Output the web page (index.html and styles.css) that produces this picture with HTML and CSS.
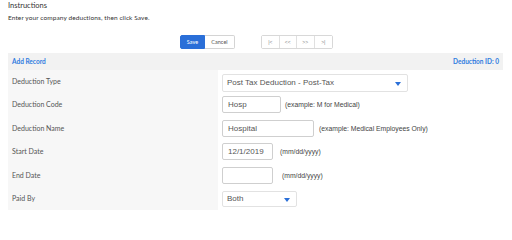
FILE: index.html
```html
<!DOCTYPE html>
<html>
<head>
<meta charset="utf-8">
<link rel="stylesheet" href="styles.css">
</head>
<body>
<div class="intro">
  <div class="intro-title">Instructions</div>
  <div class="intro-text">Enter your company deductions, then click Save.</div>
</div>
<div class="toolbar">
  <div class="btn-group">
    <button class="btn btn-primary">Save</button>
    <button class="btn btn-default">Cancel</button>
  </div>
  <div class="pager">
    <button class="pg">|&lt;</button>
    <button class="pg">&lt;&lt;</button>
    <button class="pg">&gt;&gt;</button>
    <button class="pg">&gt;|</button>
  </div>
</div>
<div class="bar">
  <span class="link">Add Record</span>
  <span class="link">Deduction ID: 0</span>
</div>
<div class="form">
  <div class="label">Deduction Type</div>
  <div class="field r4">
    <div class="select w-type">Post Tax Deduction - Post-Tax<span class="caret"></span></div>
  </div>
  <div class="label">Deduction Code</div>
  <div class="field">
    <div class="input w-code">Hosp</div><span class="hint">(example: M for Medical)</span>
  </div>
  <div class="label">Deduction Name</div>
  <div class="field">
    <div class="input w-name">Hospital</div><span class="hint">(example: Medical Employees Only)</span>
  </div>
  <div class="label">Start Date</div>
  <div class="field">
    <div class="input w-date">12/1/2019</div><span class="hint h-date">(mm/dd/yyyy)</span>
  </div>
  <div class="label">End Date</div>
  <div class="field">
    <div class="input w-date"></div><span class="hint h-date2">(mm/dd/yyyy)</span>
  </div>
  <div class="label">Paid By</div>
  <div class="field r4">
    <div class="select w-paid">Both<span class="caret"></span></div>
  </div>
</div>
</body>
</html>
```
FILE: styles.css
```css
* { box-sizing: border-box; }
body {
  margin: 0;
  background: #fff;
  font-family: Lato, "Open Sans", Arial, sans-serif;
  color: #333;
  width: 512px;
  height: 210px;
  overflow: hidden;
}
.intro { padding: 1px 8px 0; }
.intro-title { font-size: 7.5px; line-height: 9px; color: #333; }
.intro-text { font-size: 6.5px; line-height: 9px; margin-top: 3px; color: #333; letter-spacing: 0.1px; }
.toolbar {
  display: flex;
  justify-content: center;
  gap: 26px;
  margin-top: 13px;
  padding-left: 1px;
}
.btn-group { display: flex; }
.btn {
  font-family: Lato, Arial, sans-serif;
  font-size: 5.5px;
  height: 14px;
  padding: 0;
  border-radius: 2px;
  margin: 0;
}
.btn-primary {
  width: 25px;
  background: #2a6fd8;
  color: #fff;
  border: 1px solid #2a6fd8;
  border-radius: 2px 0 0 2px;
}
.btn-default {
  width: 30px;
  background: #fff;
  color: #555;
  border: 1px solid #d4d4d4;
  border-left: none;
  border-radius: 0 2px 2px 0;
}
.pager {
  display: flex;
  border: 1px solid #d8d8d8;
  border-radius: 2px;
  height: 14px;
}
.pg {
  width: 17.5px;
  height: 12px;
  border: none;
  border-right: 1px solid #e0e0e0;
  background: #fff;
  color: #888;
  font-size: 5px;
  padding: 0;
  font-family: Arial, sans-serif;
}
.pg:last-child { border-right: none; }
.bar {
  margin: 4px 9px 0 8px;
  height: 17px;
  background: #f2f2f2;
  display: flex;
  justify-content: space-between;
  align-items: center;
  padding: 0 4px;
}
.link {
  color: #2f7be0;
  font-size: 6.5px;
  font-weight: bold;
}
.form {
  display: grid;
  grid-template-columns: 210px 1fr;
  grid-auto-rows: 23.4px;
  margin: 0 8px;
}
.label {
  background: #f7f7f7;
  font-size: 7px;
  line-height: 8px;
  color: #555;
  padding: 7px 0 0 4px;
}
.field {
  display: flex;
  align-items: flex-start;
  padding: 3px 0 0 4px;
}
.field.r4 { padding-top: 4px; }
.input, .select {
  height: 17px;
  border: 1px solid #cfcfcf;
  border-radius: 2px;
  font-family: Arial, "Liberation Sans", sans-serif;
  font-size: 8px;
  line-height: 15px;
  color: #555;
  padding-left: 5px;
  background: #fff;
}
.select {
  position: relative;
  height: 18px;
  line-height: 16px;
  border-color: #e2e2e2;
  padding-left: 4px;
}
.field.r4 .w-paid { height: 16px; line-height: 14px; }
.caret {
  position: absolute;
  right: 6px;
  top: 7px;
  width: 0;
  height: 0;
  border-left: 3.5px solid transparent;
  border-right: 3.5px solid transparent;
  border-top: 4px solid #2a6fd8;
}
.w-paid .caret { top: 6px; right: 6px; }
.w-type { width: 186px; }
.w-paid { width: 75px; }
.w-code { width: 59px; }
.w-name { width: 92px; }
.w-date { width: 51px; }
.hint {
  font-family: Arial, "Liberation Sans", sans-serif;
  font-size: 6.8px;
  color: #444;
  margin-left: 4px;
  line-height: 17px;
}
.w-name + .hint { margin-left: 5px; }
.h-date { margin-left: 7px; }
.h-date2 { margin-left: 9px; }
```
